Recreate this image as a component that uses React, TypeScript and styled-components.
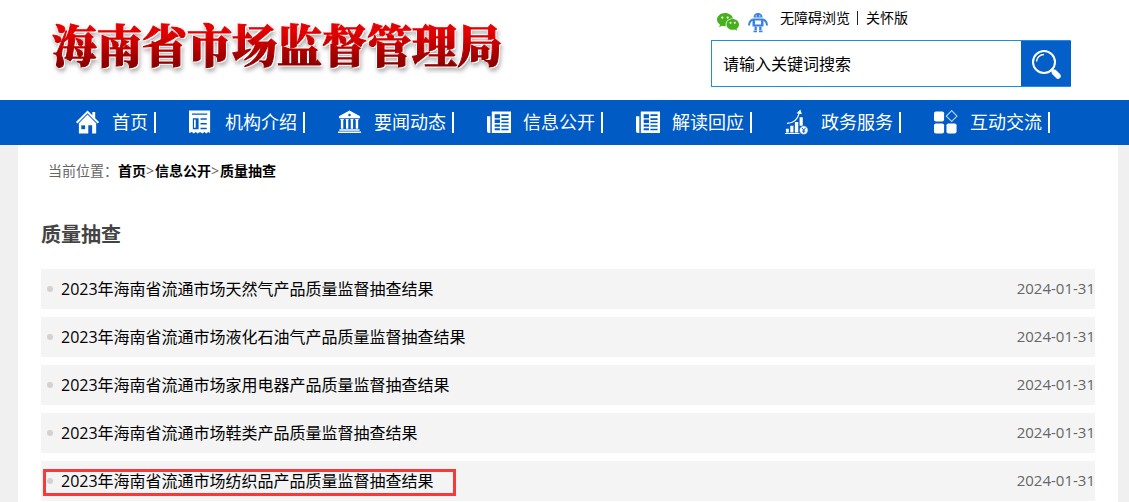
import React from "react";
import styled, { createGlobalStyle } from "styled-components";

const GlobalStyle = createGlobalStyle`
  *, *::before, *::after { box-sizing: border-box; }
  body {
    margin: 0;
    background: #f0f0f0;
    color: #000;
    font-family: "Open Sans", "Noto Sans CJK SC", sans-serif;
    font-size: 16px;
  }
  a { color: inherit; text-decoration: none; }
  ul { list-style: none; margin: 0; padding: 0; }
`;

const Page = styled.div`
  min-height: 100vh;
  display: flex;
  flex-direction: column;
`;

const Header = styled.header`
  height: 100px;
  padding: 0 58px 0 50px;
  background: #fff;
  display: flex;
  justify-content: space-between;
`;

const SiteName = styled.h1`
  margin: 10px 0 0;
  height: 68px;
  padding: 0 2px;
  font-family: "Noto Serif CJK SC", "Noto Sans CJK SC", sans-serif;
  font-size: 45px;
  font-weight: 900;
  line-height: 68px;
  white-space: nowrap;
  color: transparent;
  -webkit-text-stroke: 1px transparent;
  background: linear-gradient(#e80000 18%, #e00000 35%, #8c0000 80%);
  background-clip: text;
  -webkit-background-clip: text;
  filter: drop-shadow(1px 1px 0 #fff) drop-shadow(-1px -1px 0 #fff) drop-shadow(1px 3px 2px rgba(0, 0, 0, 0.3));
`;

const HeaderTools = styled.div`
  width: 360px;
  display: flex;
  flex-direction: column;
`;

const QuickLinks = styled.div`
  height: 40px;
  padding: 8px 0 0 5px;
  display: flex;
  align-items: flex-start;
  font-size: 14px;
  line-height: 20px;
`;

const IconLink = styled.a`
  width: 24px;
  height: 24px;
  margin: 3px 8px 0 0;
`;

const TextLink = styled.a``;

const Pipe = styled.span`
  width: 1px;
  height: 14px;
  margin: 3px 8px 0 7px;
  background: #222;
`;

const SearchForm = styled.form`
  height: 47px;
  display: flex;
  border: 1px solid #1c8de0;
  border-right: 0;
  border-radius: 1px;
`;

const SearchInput = styled.input`
  flex: 1;
  min-width: 0;
  padding: 0 11px 2px 11px;
  border: 0;
  outline: 0;
  background: #fff;
  color: #000;
  font: inherit;
`;

const SearchButton = styled.button`
  width: 50px;
  padding: 0;
  border: 0;
  background: #045fc8;
  display: flex;
  align-items: center;
  justify-content: center;
`;

const Nav = styled.nav`
  height: 45px;
  padding-left: 76px;
  background: #005bc5;
  color: #fff;
`;

const NavList = styled.ul`
  height: 100%;
  display: flex;
  align-items: center;
  gap: 33px;
`;

const NavLink = styled.a`
  height: 21px;
  padding-right: 6px;
  border-right: 2px solid #fff;
  display: flex;
  align-items: center;
  gap: 12px;
  font-size: 18px;
  line-height: 20px;
  white-space: nowrap;
`;

const NavLabel = styled.span`
  padding-bottom: 2px;
`;

const NavIcon = styled.svg`
  width: 24px;
  height: 26px;
  margin-bottom: 2px;
  flex: none;
`;

const Content = styled.main`
  flex: 1;
  margin: 0 11px 0 18px;
  padding: 16px 23px 0;
  background: #fff;
`;

const Breadcrumb = styled.nav`
  padding-left: 7px;
  display: flex;
  font-size: 14px;
  line-height: 20px;
  color: #666;
`;

const Crumb = styled.a`
  color: #000;
  font-weight: 700;
`;

const CrumbArrow = styled.span`
  width: 9px;
`;

const SectionTitle = styled.h2`
  margin: 40px 0 20px;
  font-size: 20px;
  line-height: 28px;
  font-weight: 700;
  color: #444;
`;

const ArticleList = styled.ul`
  display: flex;
  flex-direction: column;
  gap: 8px;
`;

const ArticleRow = styled.li`
  height: 40px;
  padding-left: 6px;
  background: #f4f4f4;
  display: flex;
  align-items: center;
  line-height: 24px;

  &::before {
    content: "";
    width: 6px;
    height: 6px;
    margin-right: 8px;
    border-radius: 50%;
    background: #d2d2d2;
  }
`;

const ArticleLink = styled.a<{ $marked?: boolean }>`
  position: relative;

  &::after {
    content: "";
    display: ${(p) => (p.$marked ? "block" : "none")};
    position: absolute;
    inset: 0 -22px -3px -18px;
    border: 3px solid #fb3838;
  }
`;

const ArticleDate = styled.time`
  margin-left: auto;
  padding-bottom: 2px;
  font-size: 15px;
  color: #666;
`;

const WechatIcon = () => (
  <svg width="24" height="22" viewBox="0 0 24 22" aria-hidden="true">
    <path fill="#46b11b" d="M9 2C4.600 2 1 4.900 1 8.600c0 2.100 1.200 3.900 3 5.100l-.9 2.600 3-1.500c.9.300 1.900.4 2.900.4h.9c-.2-.6-.3-1.200-.3-1.800 0-3.400 3.200-6 7-6h.4C16.200 4.300 12.900 2 9 2z" />
    <path fill="#46b11b" d="M23 13.400c0-3-2.900-5.400-6.300-5.400-3.500 0-6.300 2.400-6.300 5.400s2.800 5.400 6.300 5.400c.8 0 1.500-.1 2.200-.3l2.400 1.300-.7-2.100c1.500-1 2.400-2.500 2.400-4.300z" />
    <g fill="#fff">
      <circle cx="6.300" cy="6.600" r="1.100" /><circle cx="11.700" cy="6.600" r="1.100" />
      <circle cx="14.500" cy="11.800" r="1" /><circle cx="18.800" cy="11.800" r="1" />
    </g>
  </svg>
);

const RobotIcon = () => (
  <svg width="20" height="22" viewBox="0 0 20 22" aria-hidden="true" fill="#3b82dc">
    <path d="M5.500 6.500C5.500 3.700 7.400 2 10 2s4.500 1.700 4.500 4.500z" />
    <circle cx="8.200" cy="4.900" r=".7" fill="#fff" /><circle cx="11.800" cy="4.900" r=".7" fill="#fff" />
    <path d="M4.500 7.500h11v8h-11zM7 9.500v4h6v-4z" fillRule="evenodd" />
    <path d="M4.800 8.500C2 9.500 1.200 11.500 1 14.500M15.200 8.500c2.800 1 3.600 3 3.800 6" fill="none" stroke="#3b82dc" strokeWidth="2" />
    <path d="M6.500 15.500h2.300V19H6.500zM11.200 15.500h2.300V19h-2.300zM5.500 19.500h3.500v1.800H5.500zM11 19.500h3.500v1.800H11z" />
  </svg>
);

const SearchIcon = () => (
  <svg width="30" height="30" viewBox="0 0 30 30" aria-hidden="true" fill="none" stroke="#fff">
    <circle cx="13" cy="13" r="11" strokeWidth="2" />
    <path d="M5.500 12.500A7.500 7.500 0 0 1 13 5.500" strokeWidth="1.500" />
    <path d="M20 20l2.500 2.500" strokeWidth="3" />
    <path d="M23.500 23.500l3.500 3.500" strokeWidth="5.500" strokeLinecap="round" />
  </svg>
);

const BLUE = "#005bc5";

const HomeGlyph = () => (
  <>
    <path d="M12 1L0 13l1.500 1.500L12 4l10.500 10.500L24 13l-4-4V2.500h-3V6z" />
    <path d="M3 14.200l9-9 9 9V25h-4.200v-8.500h-4V25H3z" />
    <path d="M5.500 16.500h4v4h-4z" fill={BLUE} />
  </>
);

const ReceiptGlyph = () => (
  <>
    <path d="M0 1h22v23.500l-2-1-2 1.500-2-1.500-2 1.500-2.500-1.500L9 25l-2-1.500L5 25l-2-1.500-3 1z" />
    <path d="M3 4.200h16v1.300H3zM4 9h6v11.500H4zM12 9h6.500v1.600H12zM12 14h6.500v1.600H12zM12 18.900h6.500v1.600H12z" fill={BLUE} />
    <path d="M5.200 10.500H7V19H5.200z" />
  </>
);

const BankGlyph = () => (
  <>
    <path d="M12 1l11 6v2H1V7z" />
    <circle cx="12" cy="5.800" r="1.300" fill={BLUE} />
    <path d="M2.500 10h3.500v1H5.500v9H3v-9h-.5zM8 10h3v1h-.3v9H8.300v-9H8zM13 10h3v1h-.3v9h-2.400v-9H13zM18 10h3.500v1H21v9h-2.500v-9H18zM1.500 20.500h21V22h-21zM0 23h24v1.500H0z" />
  </>
);

const NewsGlyph = () => (
  <>
    <path d="M5 2h20v22.500H5zM0 7h3.500v17.500H2A2 2 0 0 1 0 22.500z" />
    <path d="M8 5h5.500v4H8zM8 10.500h5.500V14H8zM8 15.500h5.500V18H8zM8 19.500h5.500v2H8zM15 5h7.500v1.800H15zM15 9h7.500v1.800H15zM15 12.800h7.500v1.500H15zM15 16.500h7.500V18H15zM15 20h7.500v1.500H15z" fill={BLUE} />
  </>
);

const ChartGlyph = () => (
  <>
    <path d="M1 20h3v4H1zM5.500 17h3.300v7H5.500zM10.300 13h3.500v11h-3.500zM15.200 8h3.300v9h-3.300zM0 24.500h15v1H0z" />
    <path d="M2 14.500c6 0 11-4 13-11" fill="none" stroke="#fff" strokeWidth="1.200" />
    <path d="M12 4l4-4 1.500 5z" />
    <circle cx="19.500" cy="21.500" r="4.500" stroke={BLUE} strokeWidth=".6" />
    <path d="M17.500 19l2 2.500 2-2.500M19.500 21.500v3M17.800 22.500h3.400" fill="none" stroke={BLUE} strokeWidth="1" />
  </>
);

const TilesGlyph = () => (
  <>
    <rect x="0" y="2" width="10.500" height="10.500" rx="2" />
    <rect x="0" y="14.500" width="10.500" height="10.500" rx="2" />
    <rect x="13" y="14.500" width="10.500" height="10.500" rx="2" />
    <path d="M18.400 1.200l5.600 5.600-5.600 5.600-5.600-5.600z" fill="none" stroke="#b9d6f5" strokeWidth="1.200" strokeLinejoin="round" />
  </>
);

const navItems = [
  { label: "首页", Glyph: HomeGlyph },
  { label: "机构介绍", Glyph: ReceiptGlyph },
  { label: "要闻动态", Glyph: BankGlyph },
  { label: "信息公开", Glyph: NewsGlyph },
  { label: "解读回应", Glyph: NewsGlyph },
  { label: "政务服务", Glyph: ChartGlyph },
  { label: "互动交流", Glyph: TilesGlyph },
];

const articles = [
  { title: "2023年海南省流通市场天然气产品质量监督抽查结果", date: "2024-01-31" },
  { title: "2023年海南省流通市场液化石油气产品质量监督抽查结果", date: "2024-01-31" },
  { title: "2023年海南省流通市场家用电器产品质量监督抽查结果", date: "2024-01-31" },
  { title: "2023年海南省流通市场鞋类产品质量监督抽查结果", date: "2024-01-31" },
  { title: "2023年海南省流通市场纺织品产品质量监督抽查结果", date: "2024-01-31", marked: true },
];

export default function App() {
  return (
    <Page>
      <GlobalStyle />
      <Header>
        <SiteName>海南省市场监督管理局</SiteName>
        <HeaderTools>
          <QuickLinks>
            <IconLink href="#" aria-label="微信"><WechatIcon /></IconLink>
            <IconLink href="#" aria-label="智能机器人"><RobotIcon /></IconLink>
            <TextLink href="#">无障碍浏览</TextLink>
            <Pipe />
            <TextLink href="#">关怀版</TextLink>
          </QuickLinks>
          <SearchForm onSubmit={(e) => e.preventDefault()}>
            <SearchInput type="text" aria-label="搜索" defaultValue="请输入关键词搜索" />
            <SearchButton type="submit" aria-label="搜索"><SearchIcon /></SearchButton>
          </SearchForm>
        </HeaderTools>
      </Header>
      <Nav>
        <NavList>
          {navItems.map(({ label, Glyph }) => (
            <li key={label}>
              <NavLink href="#">
                <NavIcon viewBox="0 0 25 26" fill="#fff" aria-hidden="true"><Glyph /></NavIcon>
                <NavLabel>{label}</NavLabel>
              </NavLink>
            </li>
          ))}
        </NavList>
      </Nav>
      <Content>
        <Breadcrumb>
          <span>当前位置：</span>
          <Crumb href="#">首页</Crumb>
          <CrumbArrow>&gt;</CrumbArrow>
          <Crumb href="#">信息公开</Crumb>
          <CrumbArrow>&gt;</CrumbArrow>
          <Crumb href="#">质量抽查</Crumb>
        </Breadcrumb>
        <SectionTitle>质量抽查</SectionTitle>
        <ArticleList>
          {articles.map((a) => (
            <ArticleRow key={a.title}>
              <ArticleLink href="#" $marked={a.marked}>{a.title}</ArticleLink>
              <ArticleDate dateTime={a.date}>{a.date}</ArticleDate>
            </ArticleRow>
          ))}
        </ArticleList>
      </Content>
    </Page>
  );
}
